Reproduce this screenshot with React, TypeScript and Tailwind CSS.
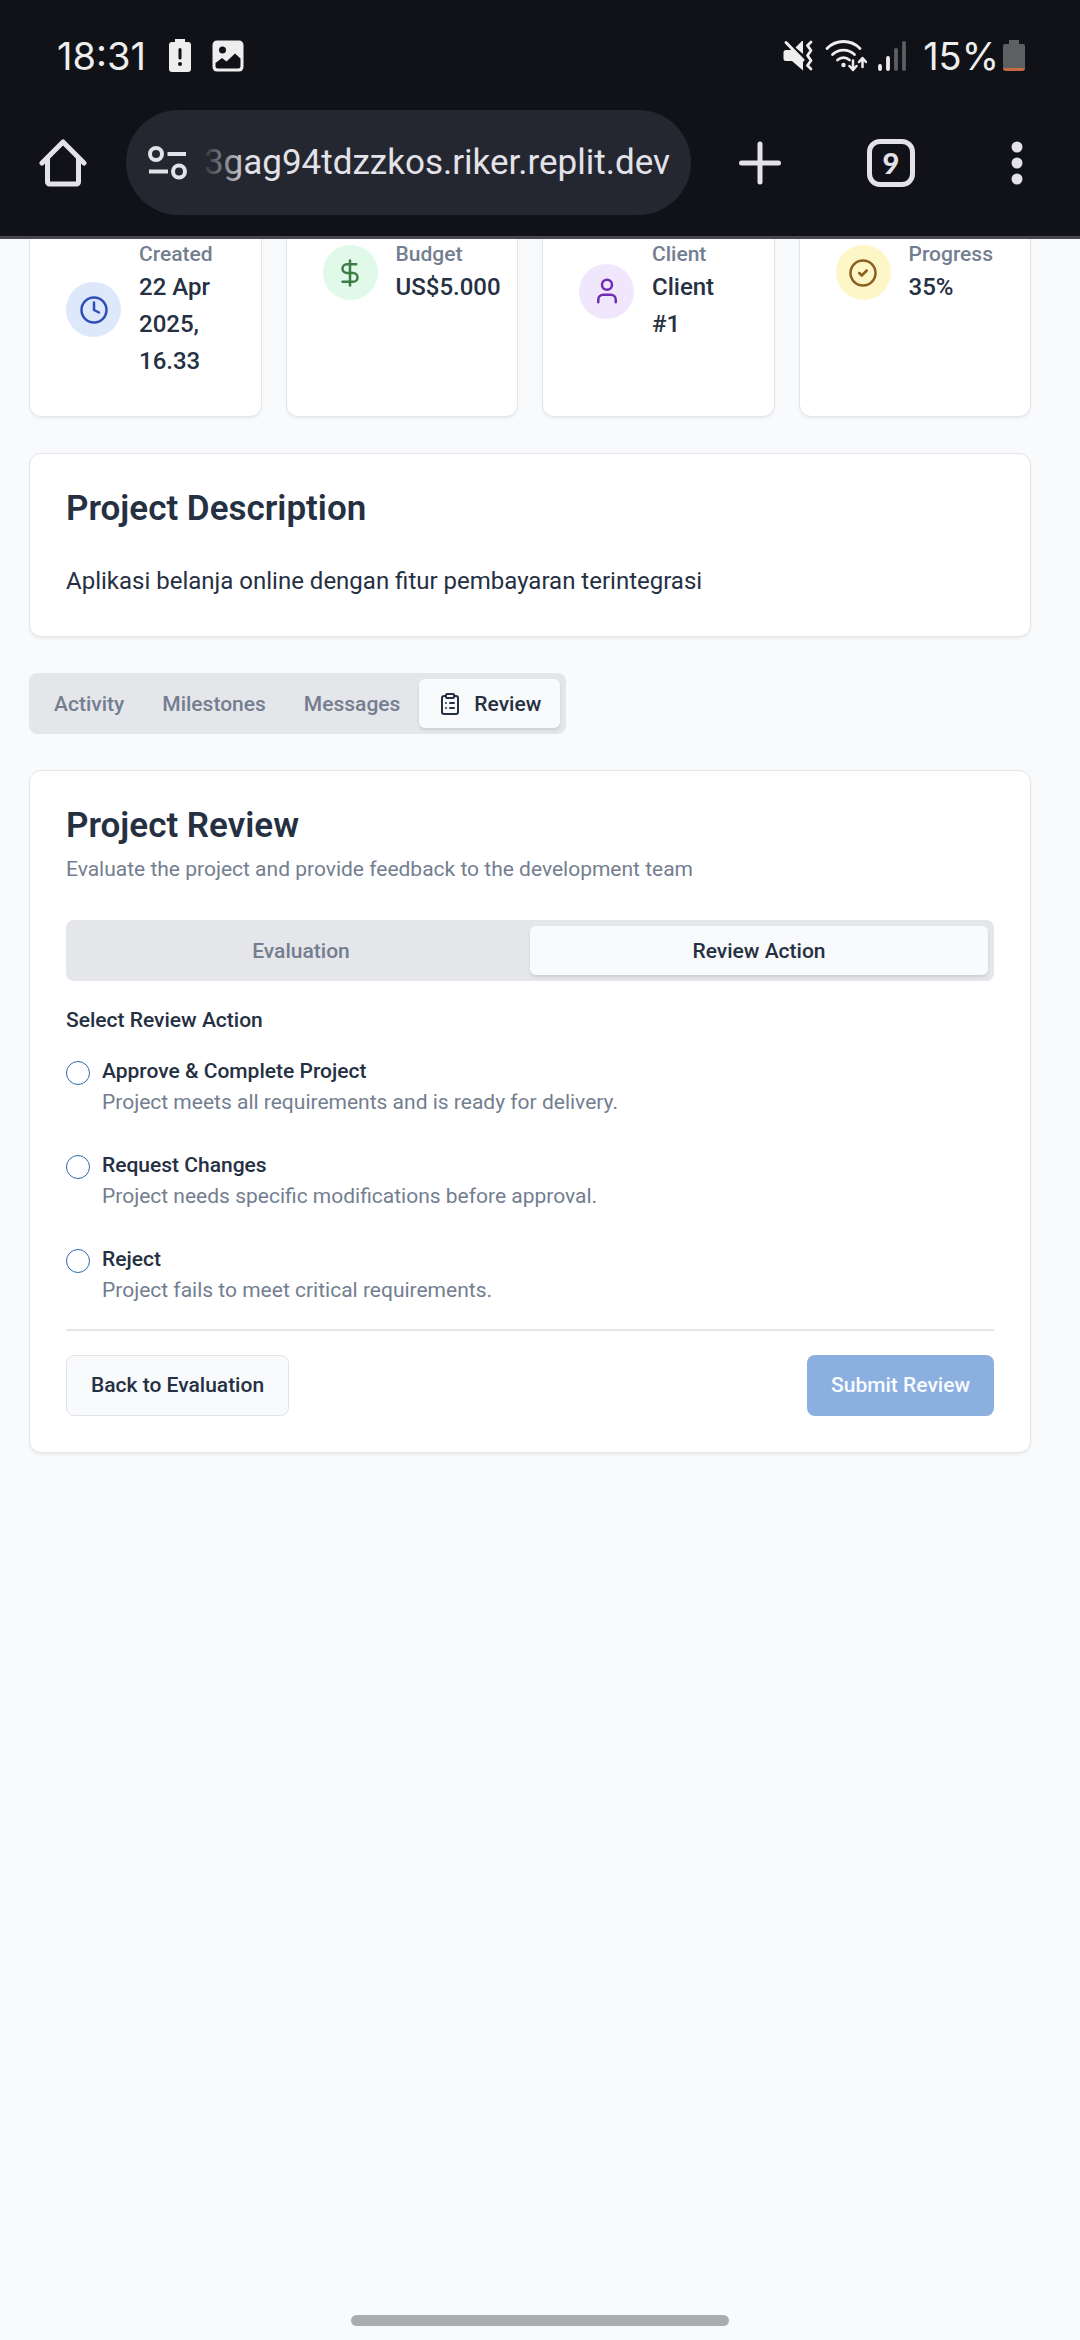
import React, { useState } from "react";
import { Clock, DollarSign, User, CircleCheck, ClipboardList } from "lucide-react";

function StatusBar() {
  return (
    <div className="flex h-[110px] items-center justify-between pl-[57px] pr-[55px] pt-0.5 font-['Inter',sans-serif] text-[#eeeeee]">
      <div className="flex items-center gap-5">
        <span className="mr-0.5 text-[38px] leading-none">18:31</span>
        <svg width="24" height="34" viewBox="0 0 24 34" aria-label="Battery alert">
          <path fill="#eee" d="M7 0h10v3h3a3 3 0 0 1 3 3v24a3 3 0 0 1-3 3H4a3 3 0 0 1-3-3V6a3 3 0 0 1 3-3h3z" />
          <path d="M12 10.500v8.500" stroke="#111217" strokeWidth="3" strokeLinecap="round" />
          <circle cx="12" cy="25" r="2" fill="#111217" />
        </svg>
        <svg width="32" height="32" viewBox="0 0 32 32" aria-label="Image">
          <rect x="0.500" y="0.500" width="31" height="31" rx="4.500" fill="#eee" />
          <circle cx="10.500" cy="10" r="3.500" fill="#111217" />
          <path d="M3.500 23l6.500-5 4.500 3.500 8.500-8 5.500 5V26a2.500 2.500 0 0 1-2.500 2.500H6A2.500 2.500 0 0 1 3.500 26z" fill="#111217" />
        </svg>
      </div>
      <div className="flex items-center gap-2.5">
        <svg width="32" height="32" viewBox="0 0 32 32" aria-label="Vibrate">
          <path d="M3 10h6l11 10v10.500L9 21H3a2.500 2.500 0 0 1-2.500-2.500v-6A2.500 2.500 0 0 1 3 10z" fill="#eee" />
          <path d="M12.500 7.500L19 1h1v13z" fill="#eee" />
          <path d="M3 2.500l17 17.500" stroke="#eee" strokeWidth="3" strokeLinecap="round" />
          <path d="M28 2l-3.500 3.500 3.500 5-3.500 5 3.500 5-3.500 5 3.500 3.500" fill="none" stroke="#eee" strokeWidth="2.800" strokeLinecap="round" strokeLinejoin="round" />
        </svg>
        <svg width="42" height="32" viewBox="0 0 42 32" aria-label="Wi-Fi">
          <g fill="none" stroke="#eee" strokeWidth="2.800" strokeLinecap="round" strokeLinejoin="round">
            <path d="M2 8.500a23 23 0 0 1 33 0" />
            <path d="M7.500 14.500a16 16 0 0 1 22 0" />
            <path d="M12.500 20a9 9 0 0 1 12 0" />
            <path d="M28 20.500v9m-3.500-3.500l3.500 4 3.500-4M37.500 27v-8.500m-3.500 3.500l3.500-4 3.500 4" strokeWidth="2.500" />
          </g>
          <circle cx="18.500" cy="25" r="2.200" fill="#eee" />
        </svg>
        <svg className="mr-1.5" width="30" height="32" viewBox="0 0 30 32" aria-label="Signal">
          <g strokeWidth="3.800" strokeLinecap="round" stroke="#eee">
            <path d="M3 26v3M11 18v11" />
            <path d="M19 10v19M27 3v26" stroke="#5e5f62" />
          </g>
        </svg>
        <div className="flex items-center gap-1">
          <span className="text-[38px] leading-none">15%</span>
          <svg width="22" height="32" viewBox="0 0 22 32" aria-label="Battery">
            <path d="M6 0h10v4h4a2 2 0 0 1 2 2v23H0V6a2 2 0 0 1 2-2h4z" fill="#5e5f62" />
            <path d="M0 28h22a3 3 0 0 1-3 3H3a3 3 0 0 1-3-3z" fill="#c96a45" />
          </svg>
        </div>
      </div>
    </div>
  );
}

function BrowserBar() {
  return (
    <div className="flex h-[129px] items-start border-b-[3px] border-[#47474d]">
      <button aria-label="Home" className="flex h-[105px] w-[126px] shrink-0 items-center justify-center">
        <svg width="48" height="48" viewBox="0 0 48 48" fill="none" stroke="#e3e2e9" strokeWidth="5" strokeLinecap="round" strokeLinejoin="round">
          <path d="M3 24L24 3l21 21" />
          <path d="M8.500 20v23a2 2 0 0 0 2 2h27a2 2 0 0 0 2-2V20" />
        </svg>
      </button>
      <div className="flex h-[105px] min-w-0 flex-1 items-center rounded-full bg-[#252730] pl-[21px] pr-[21px]">
        <button aria-label="Site settings" className="shrink-0">
          <svg width="42" height="36" viewBox="0 0 42 36" fill="none" stroke="#e3e2e9" strokeWidth="4">
            <circle cx="9" cy="9" r="6" />
            <path d="M20.500 9h18.500M2 26.500h19" />
            <circle cx="32" cy="26.500" r="6" />
          </svg>
        </button>
        <div className="relative ml-3 flex min-w-0 flex-1 justify-end overflow-hidden">
          <span className="whitespace-nowrap font-[Roboto,sans-serif] text-[35px] leading-[48px] text-[#e3e2e9]">3gag94tdzzkos.riker.replit.dev</span>
          <span className="absolute inset-y-0 left-0 w-12 bg-gradient-to-r from-[#252730] to-transparent" />
        </div>
      </div>
      <button aria-label="New tab" className="flex h-[105px] w-[137px] shrink-0 items-center justify-center">
        <svg width="44" height="44" viewBox="0 0 44 44" stroke="#e3e2e9" strokeWidth="5" strokeLinecap="round">
          <path d="M22 3v38M3.500 22h37" />
        </svg>
      </button>
      <button aria-label="Tabs" className="flex h-[105px] w-[126px] shrink-0 items-center justify-center">
        <span className="flex size-12 items-center justify-center rounded-[13px] border-[5px] border-[#e3e2e9] font-[Lato,sans-serif] text-[29px] font-black leading-none text-[#e3e2e9]">9</span>
      </button>
      <button aria-label="Menu" className="flex h-[105px] w-[126px] shrink-0 items-center justify-center">
        <svg width="12" height="44" viewBox="0 0 12 44" fill="#e3e2e9">
          <circle cx="6" cy="6" r="5.500" />
          <circle cx="6" cy="22" r="5.500" />
          <circle cx="6" cy="38" r="5.500" />
        </svg>
      </button>
    </div>
  );
}

function Card({ className = "", children }: { className?: string; children: React.ReactNode }) {
  return (
    <section className={"rounded-xl border border-[#e3e5e9] bg-white shadow-[0_2px_3px_rgba(0,0,0,0.05)] " + className}>
      {children}
    </section>
  );
}

const stats = [
  { label: "Created", value: "22 Apr 2025, 16.33", Icon: Clock, tone: "bg-[#dde8fb] text-[#2f4fb8]" },
  { label: "Budget", value: "US$5.000", Icon: DollarSign, tone: "bg-[#e0f9e8] text-[#3d7d45]" },
  { label: "Client", value: "Client #1", Icon: User, tone: "bg-[#f1e7fd] text-[#6c2bb0]" },
  { label: "Progress", value: "35%", Icon: CircleCheck, tone: "bg-[#fdf7c8] text-[#8b5e21]" },
];

const tabClass = "flex h-[49px] items-center justify-center rounded-md px-[19px] text-[21px] font-medium leading-[30px]";
const activeTab = " bg-[#f9fafc] text-[#253042] shadow-[0_2px_3px_rgba(0,0,0,0.1)]";

const actions = [
  { id: "approve", title: "Approve & Complete Project", text: "Project meets all requirements and is ready for delivery." },
  { id: "changes", title: "Request Changes", text: "Project needs specific modifications before approval." },
  { id: "reject", title: "Reject", text: "Project fails to meet critical requirements." },
];

export default function App() {
  const [action, setAction] = useState("");
  return (
    <div className="flex min-h-screen flex-col bg-[#f9fafc] font-[Roboto,sans-serif] text-[#253042]">
      <header className="relative z-10 bg-[#111217]">
        <StatusBar />
        <BrowserBar />
      </header>

      <main className="flex flex-1 flex-col gap-9 overflow-hidden pl-[29px] pr-[49px]">
        <div className="-mt-[37px] grid grid-cols-4 gap-6">
          {stats.map(({ label, value, Icon, tone }) => (
            <Card key={label} className="p-9">
              <div className="flex items-center gap-[18px]">
                <span className={"flex size-[55px] shrink-0 items-center justify-center rounded-full " + tone}>
                  <Icon size={30} />
                </span>
                <div>
                  <p className="text-[21px] font-medium leading-[30px] text-[#737e90]">{label}</p>
                  <p className="text-2xl font-medium leading-[37px]">{value}</p>
                </div>
              </div>
            </Card>
          ))}
        </div>

        <Card className="p-9">
          <h2 className="text-[35px] font-semibold leading-[37px]">Project Description</h2>
          <p className="mt-9 text-2xl leading-[37px]">Aplikasi belanja online dengan fitur pembayaran terintegrasi</p>
        </Card>

        <div role="tablist" className="flex h-[61px] items-center self-start rounded-lg bg-[#e5e6ea] px-1.5">
          <button role="tab" className={tabClass + " text-[#737e90]"}>Activity</button>
          <button role="tab" className={tabClass + " text-[#737e90]"}>Milestones</button>
          <button role="tab" className={tabClass + " text-[#737e90]"}>Messages</button>
          <button role="tab" aria-selected="true" className={tabClass + activeTab}>
            <ClipboardList size={24} className="mr-3" />
            Review
          </button>
        </div>

        <Card className="p-9">
          <h2 className="text-[35px] font-semibold leading-[37px]">Project Review</h2>
          <p className="mt-2.5 text-[21px] leading-[30px] text-[#737e90]">Evaluate the project and provide feedback to the development team</p>

          <div role="tablist" className="mt-9 grid h-[61px] grid-cols-2 items-center rounded-lg bg-[#e5e6ea] px-1.5">
            <button role="tab" className={tabClass + " text-[#737e90]"}>Evaluation</button>
            <button role="tab" aria-selected="true" className={tabClass + activeTab}>Review Action</button>
          </div>

          <fieldset className="mt-6">
            <legend className="text-[21px] font-medium leading-[30px]">Select Review Action</legend>
            <div className="mt-6 flex flex-col gap-9">
              {actions.map((a) => (
                <div key={a.id} className="flex items-start gap-3">
                  <input
                    type="radio"
                    id={a.id}
                    name="action"
                    checked={action === a.id}
                    onChange={() => setAction(a.id)}
                    aria-describedby={a.id + "-text"}
                    className="mt-0.5 size-6 shrink-0 appearance-none rounded-full border border-[#2f69b3] checked:border-8"
                  />
                  <div>
                    <label htmlFor={a.id} className="block text-[21px] font-medium leading-6">{a.title}</label>
                    <p id={a.id + "-text"} className="mt-1 text-[21px] leading-[30px] text-[#737e90]">{a.text}</p>
                  </div>
                </div>
              ))}
            </div>
          </fieldset>

          <div className="mt-6 flex items-center justify-between border-t-2 border-[#e5e7eb] pt-6">
            <button className="h-[61px] rounded-lg border border-[#e1e3e7] bg-[#f9fafc] px-6 text-[21px] font-medium">Back to Evaluation</button>
            <button disabled className="h-[61px] rounded-lg bg-[#8bafdf] px-6 text-[21px] font-medium text-[#f8fbff]">Submit Review</button>
          </div>
        </Card>
      </main>

      <footer className="flex h-[25px] justify-center">
        <div className="h-[11px] w-[35%] rounded-full bg-[#abacae]" />
      </footer>
    </div>
  );
}
